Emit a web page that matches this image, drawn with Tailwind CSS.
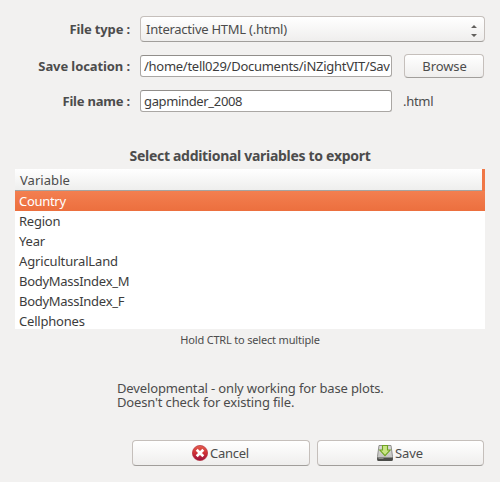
<!DOCTYPE html>
<html lang="en">
<head>
<meta charset="utf-8">
<title>Export plot</title>
<script src="https://cdn.jsdelivr.net/npm/@tailwindcss/browser@4"></script>
</head>
<body class="w-[500px] h-[482px] overflow-hidden bg-[#f2f1f0] font-['Noto_Sans',sans-serif] text-[13px] leading-5 text-[#4c4c4c] whitespace-nowrap">
<main class="flex flex-col w-[500px] h-[482px] px-[15px] pt-4">
  <form class="flex flex-col">
    <div class="flex items-center h-[26px]">
      <label class="w-[115px] text-right font-bold tracking-[-0.15px]">File type :</label>
      <div class="ml-[10px] w-[345px] h-[26px] flex items-center justify-between pl-[5px] pr-[7px] rounded-[4px] border border-[#c5bfbb] border-b-[#a19e9b] bg-linear-to-b from-white to-[#efeeed]">
        <span class="tracking-[-0.25px]">Interactive HTML (.html)</span>
        <svg class="mt-1" width="6" height="12" viewBox="0 0 6 12" fill="#62605d"><path d="M0 3 3 0l3 3zM0 9h6l-3 3z"/></svg>
      </div>
    </div>
    <div class="flex items-center mt-[11px] h-[26px]">
      <label class="w-[115px] text-right font-bold tracking-[-0.1px]">Save location :</label>
      <div class="ml-[10px] w-[252px] h-[22px] rounded-[3px] border border-[#aaa7a4] border-t-[#918e8b] bg-white pl-[3px] pr-px text-[#3c3c3c]"><div class="flex items-center h-5 overflow-hidden"><span class="tracking-[-0.27px]">/home/tell029/Documents/iNZightVIT/Sav</span></div></div>
      <div class="ml-3 w-[80px] h-[24px] flex items-center justify-center pl-px rounded-[4px] border border-[#c5bfbb] border-b-[#a19e9b] bg-linear-to-b from-white to-[#efeeed]"><span class="tracking-[-0.1px]">Browse</span></div>
    </div>
    <div class="flex items-center mt-[11px] h-[22px]">
      <label class="w-[115px] text-right font-bold tracking-[-0.2px]">File name :</label>
      <div class="ml-[10px] w-[252px] h-[22px] flex items-center pl-[3px] rounded-[3px] border border-[#aaa7a4] border-t-[#918e8b] bg-white text-[#3c3c3c]"><span class="tracking-[-0.35px]">gapminder_2008</span></div>
      <span class="ml-[11px] tracking-[-0.3px]">.html</span>
    </div>
  </form>

  <h1 class="mt-[34px] h-5 text-center text-[14px] font-bold"><span class="tracking-[-0.3px]">Select additional variables to export</span></h1>

  <section class="mt-[3px] w-[470px] h-[160px] bg-white text-[#3c3c3c] overflow-hidden">
    <div class="flex h-[22px]">
      <div class="flex items-center w-[467px] pl-[5px] border-b border-[#a5a3a0] bg-linear-to-b from-white to-[#eeeeed] text-[#4c4c4c]"><span class="tracking-[0.05px]">Variable</span></div>
      <div class="w-[3px] bg-[#f07746]"></div>
    </div>
    <ul class="[&>li]:h-5 [&>li]:pl-1">
      <li class="bg-linear-to-b from-[#f37f50] to-[#ec6f3e] text-white"><span class="tracking-[-0.3px]">Country</span></li>
      <li><span class="tracking-[-0.25px]">Region</span></li>
      <li><span class="tracking-[-0.2px]">Year</span></li>
      <li><span class="tracking-[-0.15px]">AgriculturalLand</span></li>
      <li><span class="tracking-[-0.28px]">BodyMassIndex_M</span></li>
      <li><span class="tracking-[-0.28px]">BodyMassIndex_F</span></li>
      <li><span class="tracking-[-0.2px]">Cellphones</span></li>
    </ul>
  </section>
  <p class="mt-[3px] h-4 leading-4 text-center text-[11px]"><span class="tracking-[-0.18px]">Hold CTRL to select multiple</span></p>

  <p class="mt-[33px] ml-[102px] leading-[14px]"><span class="tracking-[-0.14px]">Developmental - only working for base plots.</span><br><span class="tracking-[-0.15px]">Doesn't check for existing file.</span></p>

  <div class="flex mt-[31px] ml-[117px] gap-[7px]">
    <div class="flex items-center w-[178px] h-[26px] pl-[59px] rounded-[4px] border border-[#c5bfbb] border-b-[#a19e9b] bg-linear-to-b from-white to-[#efeeed]">
      <svg width="16" height="16" viewBox="0 0 16 16"><defs><linearGradient id="r" x2="0" y2="1"><stop stop-color="#e3614f"/><stop offset=".5" stop-color="#cf2f36"/><stop offset="1" stop-color="#98123f"/></linearGradient></defs><circle cx="8" cy="8" r="7.600" fill="url(#r)" stroke="#b52a38" stroke-width=".7"/><path d="m4.700 4.700 6.600 6.600m0-6.600-6.600 6.600" stroke="#fff" stroke-width="2.700"/></svg>
      <span class="ml-[2px] tracking-[-0.25px]">Cancel</span>
    </div>
    <div class="flex items-center w-[167px] h-[26px] pl-[59px] rounded-[4px] border border-[#c5bfbb] border-b-[#a19e9b] bg-linear-to-b from-white to-[#efeeed]">
      <svg width="16" height="16" viewBox="0 0 16 16"><defs><linearGradient id="d" x2="0" y2="1"><stop stop-color="#dededc"/><stop offset="1" stop-color="#bcbcb9"/></linearGradient></defs><path d="M2 .5h12l1.500 11v3q0 1-1 1h-13q-1 0-1-1v-3z" fill="url(#d)" stroke="#8f8f8c"/><path d="M.2 12.500h15.600v2q0 1.500-1.500 1.500H1.700Q.2 16 .2 14.500z" fill="#4b4c49"/><path d="M1.500 13.500h5" stroke="#8a8b88"/><path d="M5.500.5h5v4.500h2.700L8 10.700 2.800 5h2.700z" fill="#c9e585" stroke="#6fa324" stroke-width="1.100"/></svg>
      <span class="ml-[2px] tracking-[-0.1px]">Save</span>
    </div>
  </div>
</main>
</body>
</html>
